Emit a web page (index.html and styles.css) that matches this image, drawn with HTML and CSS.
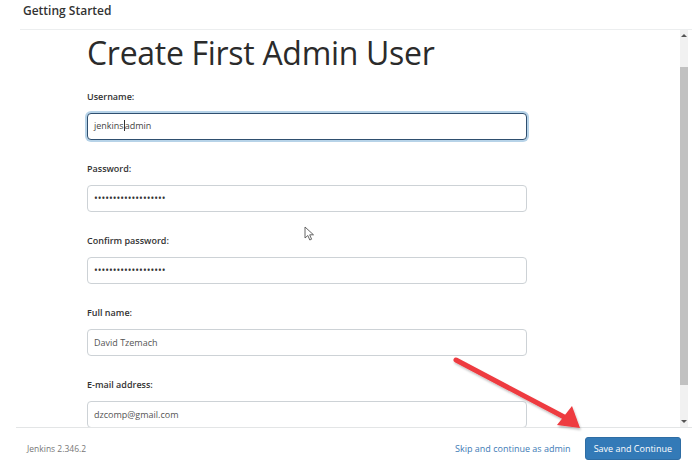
FILE: index.html
```html
<!DOCTYPE html>
<html>
<head>
<meta charset="utf-8">
<link rel="stylesheet" href="styles.css">
</head>
<body>
<div class="page">
  <header class="top">Getting Started</header>
  <div class="panel">
    <main class="content">
      <h1 class="title">Create First Admin User</h1>
      <div class="field">
        <label class="label">Username:</label>
        <div class="input focus">jenkins<span class="caret"></span>admin</div>
      </div>
      <div class="field">
        <label class="label">Password:</label>
        <div class="input dots">•••••••••••••••••••</div>
      </div>
      <div class="field">
        <label class="label">Confirm password:</label>
        <div class="input dots">•••••••••••••••••••</div>
      </div>
      <div class="field">
        <label class="label">Full name:</label>
        <div class="input">David Tzemach</div>
      </div>
      <div class="field">
        <label class="label">E-mail address:</label>
        <div class="input">dzcomp@gmail.com</div>
      </div>
    </main>
    <div class="scrollbar">
      <div class="sb-arrow up"></div>
      <div class="sb-track"><div class="sb-thumb"></div></div>
      <div class="sb-arrow down"></div>
    </div>
  </div>
  <footer class="foot">
    <span class="version">Jenkins 2.346.2</span>
    <div class="actions">
      <a class="skip">Skip and continue as admin</a>
      <button class="save">Save and Continue</button>
    </div>
  </footer>
  <svg class="cursor" width="12" height="16" viewBox="0 0 12 16">
    <path d="M1 1 L1 12 L3.8 9.5 L5.8 14 L7.6 13.2 L5.7 8.8 L9.5 8.8 Z" fill="#fff" stroke="#555" stroke-width="0.9" stroke-linejoin="round"/>
  </svg>
  <svg class="arrow" width="692" height="469" viewBox="0 0 692 469">
    <defs>
      <filter id="sh" x="-10%" y="-10%" width="120%" height="130%">
        <feDropShadow dx="1" dy="2" stdDeviation="1.2" flood-color="#000" flood-opacity="0.25"/>
      </filter>
    </defs>
    <g filter="url(#sh)">
      <line x1="456" y1="360" x2="566" y2="418" stroke="#ee3a3f" stroke-width="5" stroke-linecap="round"/>
      <polygon points="580,428 557,425 572,406" fill="#ee3a3f"/>
    </g>
  </svg>
</div>
</body>
</html>
```
FILE: styles.css
```css
* { box-sizing: border-box; }
html, body { margin: 0; padding: 0; background: #fff; }
body {
  font-family: "Open Sans", "Noto Sans", "DejaVu Sans", sans-serif;
  color: #333;
  width: 692px;
  height: 469px;
  overflow: hidden;
}
.page {
  position: relative;
  width: 692px;
  height: 469px;
  display: flex;
  flex-direction: column;
}
.top {
  height: 29px;
  padding: 3px 0 0 23px;
  font-size: 12px;
  font-weight: 600;
  line-height: 16px;
  color: #333;
}
.panel {
  margin-left: 20px;
  border-top: 1px solid #eceeef;
  height: 398px;
  display: flex;
  overflow: hidden;
}
.content {
  flex: 1;
  padding-left: 67px;
  padding-right: 153px;
  overflow: hidden;
}
.title {
  margin: 3px 0 0 0;
  font-size: 32px;
  font-weight: 400;
  line-height: 40px;
  color: #2b2b2b;
  letter-spacing: -0.3px;
}
.field {
  display: flex;
  flex-direction: column;
}
.field:first-of-type { margin-top: 17px; }
.field + .field { margin-top: 22px; }
.label {
  font-size: 9px;
  font-weight: 600;
  line-height: 13px;
  color: #333;
  margin-bottom: 10px;
}
.input {
  height: 27px;
  border: 1px solid #cdd2d6;
  border-radius: 4px;
  padding: 0 6px;
  font-size: 9px;
  line-height: 25px;
  color: #555;
  background: #fff;
}
.input.focus {
  border: 1.5px solid #2f4f6f;
  box-shadow: 0 0 0 2px #b7d3e8;
  color: #444;
  line-height: 24px;
}
.caret {
  display: inline-block;
  width: 1px;
  height: 11px;
  background: #333;
  vertical-align: -2px;
}
.input.dots {
  font-size: 10px;
  letter-spacing: 0;
  color: #333;
  line-height: 25px;
}
.scrollbar {
  width: 8px;
  margin-right: 4px;
  background: #f1f1f1;
  display: flex;
  flex-direction: column;
}
.sb-arrow {
  height: 10px;
  position: relative;
}
.sb-arrow::after {
  content: "";
  position: absolute;
  left: 1px;
  width: 0; height: 0;
  border-left: 3px solid transparent;
  border-right: 3px solid transparent;
}
.sb-arrow.up::after { top: 4px; border-bottom: 3px solid #555; }
.sb-arrow.down::after { bottom: 4px; border-top: 3px solid #555; }
.sb-track {
  flex: 1;
  padding: 27px 0 32px;
  display: flex;
}
.sb-thumb {
  flex: 1;
  background: #c1c1c1;
}
.foot {
  flex: 1;
  margin-left: 16px;
  border-top: 1px solid #e3e5e6;
  display: flex;
  align-items: center;
  justify-content: space-between;
  padding: 0 11px 0 11px;
}
.version {
  font-size: 8.5px;
  color: #777;
}
.actions {
  display: flex;
  align-items: center;
  gap: 14px;
}
.skip {
  font-size: 9px;
  color: #3d7ab5;
}
.save {
  font-family: inherit;
  height: 23px;
  padding: 0 8px;
  border: 1px solid #2e6da4;
  border-radius: 3px;
  background: #337ab7;
  color: #fff;
  font-size: 9px;
}
.cursor {
  position: absolute;
  left: 304px;
  top: 226px;
}
.arrow {
  position: absolute;
  left: 0;
  top: 0;
  pointer-events: none;
}
```
